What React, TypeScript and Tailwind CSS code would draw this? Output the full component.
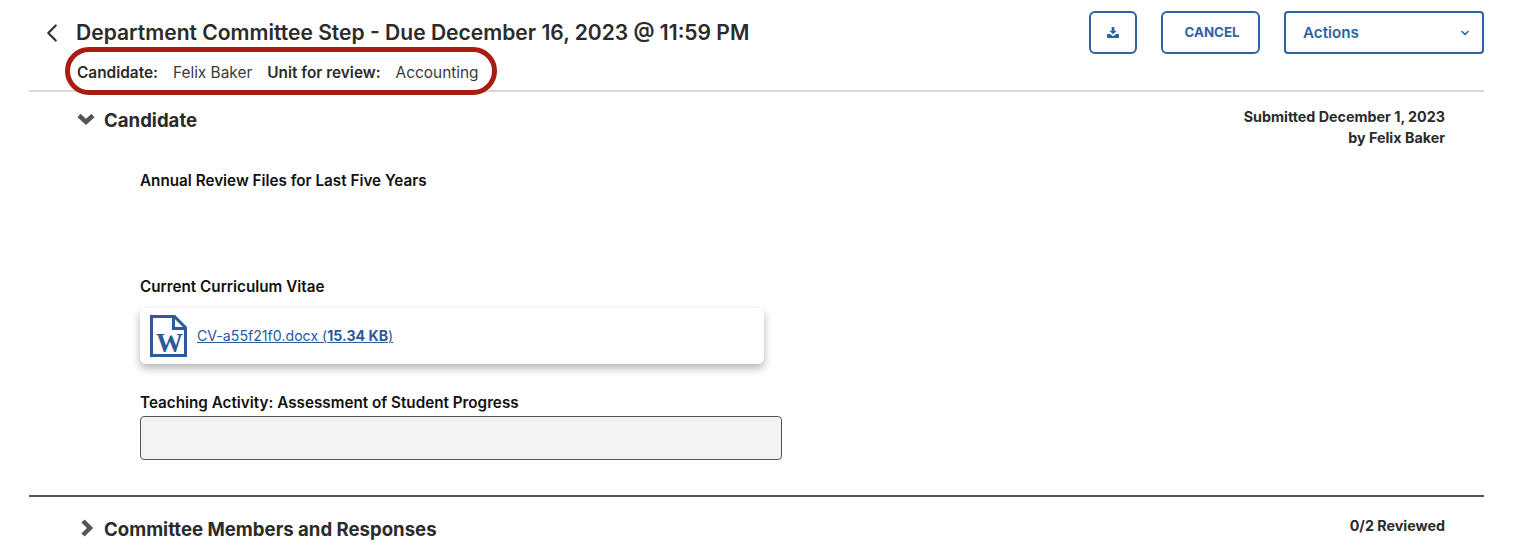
import { ChevronLeft, ChevronDown } from 'lucide-react';

const FONT = "font-['Inter',sans-serif]";

function DownloadIcon() {
  return (
    <svg viewBox="0 0 14 12" className="w-[13px] h-[11px]" fill="#2f62a3">
      <path d="M5 0h3v4h2.6L6.5 8 2.4 4H5z" />
      <path d="M0 7.5h3.2L6.5 10l3.3-2.5H13V12H0z" />
    </svg>
  );
}

function WordIcon() {
  return (
    <svg viewBox="0 0 37 42" className="w-[37px] h-[42px]">
      <path d="M1.5 1.5h23l11 11v28h-34z" fill="white" stroke="#2c5a9a" strokeWidth="3" />
      <path d="M23.5 1.5v12h12" fill="none" stroke="#2c5a9a" strokeWidth="3" />
      <text x="19.5" y="37" textAnchor="middle" fontSize="27" fontWeight="700" fill="#2c5a9a" fontFamily="'Liberation Serif', serif">W</text>
    </svg>
  );
}

function SectionChevron({ open }: { open?: boolean }) {
  return (
    <svg viewBox="0 0 18 18" className="w-[18px] h-[18px] mt-[3px]">
      <path
        d={open ? 'M2 5.5 9 12l7-6.5' : 'M6 2 13 9l-7 7'}
        fill="none"
        stroke="#555"
        strokeWidth="4.5"
      />
    </svg>
  );
}

export default function App() {
  return (
    <div className={`${FONT} relative w-[1513px] h-[560px] overflow-hidden bg-white text-[#2b2b2b] pl-[29px] pr-[29px]`}>
      <div className="flex justify-between h-[92px] border-b-2 border-[#d9d9d9]">
        <div className="flex">
          <ChevronLeft className="w-[30px] h-[30px] mt-[18px] ml-[8px] text-[#333]" strokeWidth={1.8} />
          <div className="ml-[9px]">
            <h1 className="text-[21.06px] leading-[28px] font-semibold mt-[19px] whitespace-nowrap">
              Department Committee Step - Due December 16, 2023 @ 11:59 PM
            </h1>
            <div className="flex text-[15.4px] leading-[20px] mt-[16px] ml-[1px] whitespace-nowrap">
              <span className="font-semibold">Candidate:</span>
              <span className="ml-[15px] text-[#3a3a3a]">Felix Baker</span>
              <span className="ml-[15px] font-semibold">Unit for review:</span>
              <span className="ml-[15px] text-[#3a3a3a]">Accounting</span>
            </div>
          </div>
        </div>
        <div className="flex items-start gap-[24px] pt-[11px]">
          <button className="w-[48px] h-[43px] border-2 border-[#2f62a3] rounded-[6px] flex items-center justify-center">
            <DownloadIcon />
          </button>
          <button className="w-[99px] h-[43px] border-2 border-[#2f62a3] rounded-[6px] text-[#2f62a3] text-[13.3px] font-bold pl-[3px]">
            CANCEL
          </button>
          <button className="w-[200px] h-[43px] border-2 border-[#2f62a3] rounded-[4px] text-[#2f62a3] flex items-center justify-between pl-[17px] pr-[11px] pt-[1px] text-[15.2px] font-semibold">
            Actions
            <ChevronDown className="w-[12px] h-[12px]" strokeWidth={3} />
          </button>
        </div>
      </div>

      <div className="h-[405px] border-b-2 border-[#555]">
        <div className="flex justify-between pr-[39px]">
          <div className="flex items-start pt-[15px] pl-[48px]">
            <SectionChevron open />
            <h2 className="ml-[9px] text-[18.6px] leading-[26px] font-bold">Candidate</h2>
          </div>
          <div className="text-right text-[14.3px] leading-[21px] font-bold pt-[14px]">
            <div>Submitted December 1, 2023</div>
            <div>by Felix Baker</div>
          </div>
        </div>

        <div className="pl-[111px]">
          <div className="text-[15.25px] leading-[20px] font-semibold text-[#111] mt-[23px]">Annual Review Files for Last Five Years</div>
          <div className="text-[15.25px] leading-[20px] font-semibold text-[#111] mt-[86px]">Current Curriculum Vitae</div>
          <div className="w-[624px] h-[56px] mt-[11px] rounded-[6px] bg-white shadow-[0_4px_8px_rgba(0,0,0,0.3)] flex items-center pl-[10px]">
            <WordIcon />
            <a className="ml-[10px] text-[14.15px] text-[#2c5a9a] underline whitespace-nowrap">
              CV-a55f21f0.docx (<b className="font-bold">15.34 KB</b>)
            </a>
          </div>
          <div className="text-[15.25px] leading-[20px] font-semibold text-[#111] mt-[29px]">Teaching Activity: Assessment of Student Progress</div>
          <div className="w-[642px] h-[44px] mt-[3px] rounded-[4px] bg-[#f3f3f3] border border-[#555]" />
        </div>
      </div>

      <div className="flex justify-between pr-[39px]">
        <div className="flex items-start pt-[19px] pl-[48px]">
          <SectionChevron />
          <h2 className="ml-[9px] text-[18.6px] leading-[26px] font-bold">Committee Members and Responses</h2>
        </div>
        <div className="text-[14.3px] leading-[21px] font-bold pt-[18px]">0/2 Reviewed</div>
      </div>

      <div className="absolute left-[65px] top-[47px] w-[432px] h-[48px] rounded-[24px] border-[5px] border-[#a81c12]" />
    </div>
  );
}
